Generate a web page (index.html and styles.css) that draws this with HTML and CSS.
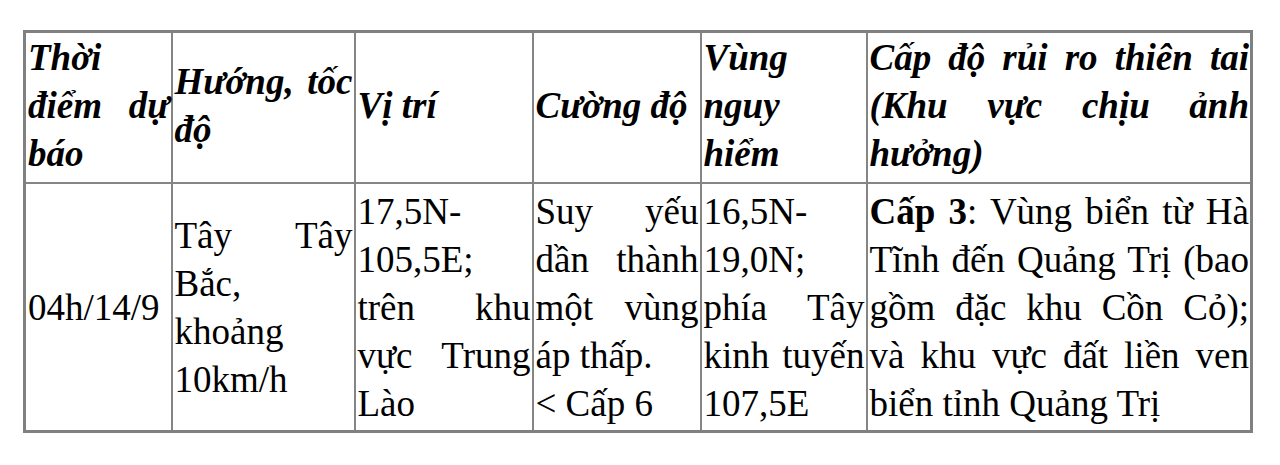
FILE: index.html
```html
<!DOCTYPE html>
<html lang="vi">
<head>
<meta charset="utf-8">
<link rel="stylesheet" href="styles.css">
</head>
<body>
<table class="forecast">
  <colgroup>
    <col class="c1"><col class="c2"><col class="c3"><col class="c4"><col class="c5"><col class="c6">
  </colgroup>
  <thead>
    <tr>
      <th>Thời điểm dự báo</th>
      <th>Hướng, tốc độ</th>
      <th>Vị trí</th>
      <th>Cường độ</th>
      <th>Vùng nguy hiểm</th>
      <th>Cấp độ rủi ro thiên tai (Khu vực chịu ảnh hưởng)</th>
    </tr>
  </thead>
  <tbody>
    <tr>
      <td>04h/14/9</td>
      <td>Tây Tây Bắc, khoảng 10km/h</td>
      <td>17,5N-105,5E; trên khu vực Trung Lào</td>
      <td>Suy yếu dần thành một vùng áp thấp.<br>&lt; Cấp 6</td>
      <td>16,5N-19,0N; phía Tây kinh tuyến 107,5E</td>
      <td><b>Cấp 3</b>: Vùng biển từ Hà Tĩnh đến Quảng Trị (bao gồm đặc khu Cồn Cỏ); và khu vực đất liền ven biển tỉnh Quảng Trị</td>
    </tr>
  </tbody>
</table>
</body>
</html>
```

FILE: styles.css
```css
html, body {
  margin: 0;
  padding: 0;
  background: #ffffff;
}

body {
  padding: 30px 0 0 23px;
}

.forecast {
  border-collapse: collapse;
  table-layout: fixed;
  width: 1227px;
  border: 3px solid #808080;
  font-family: "Liberation Serif", "Times New Roman", serif;
  font-size: 37px;
  line-height: 48px;
  color: #000;
}

.c1 { width: 147px; }
.c2 { width: 183px; }
.c3 { width: 178px; }
.c4 { width: 168px; }
.c5 { width: 166px; }
.c6 { width: 385px; }

.forecast th,
.forecast td {
  border: 2px solid #858585;
  text-align: justify;
  vertical-align: middle;
  word-wrap: normal;
}

.forecast th {
  padding: 1px 1px 4px 2px;
  font-weight: bold;
  font-style: italic;
}

.forecast td {
  padding: 4px 1px 2px 2px;
}

.forecast td b {
  font-weight: bold;
}
```
